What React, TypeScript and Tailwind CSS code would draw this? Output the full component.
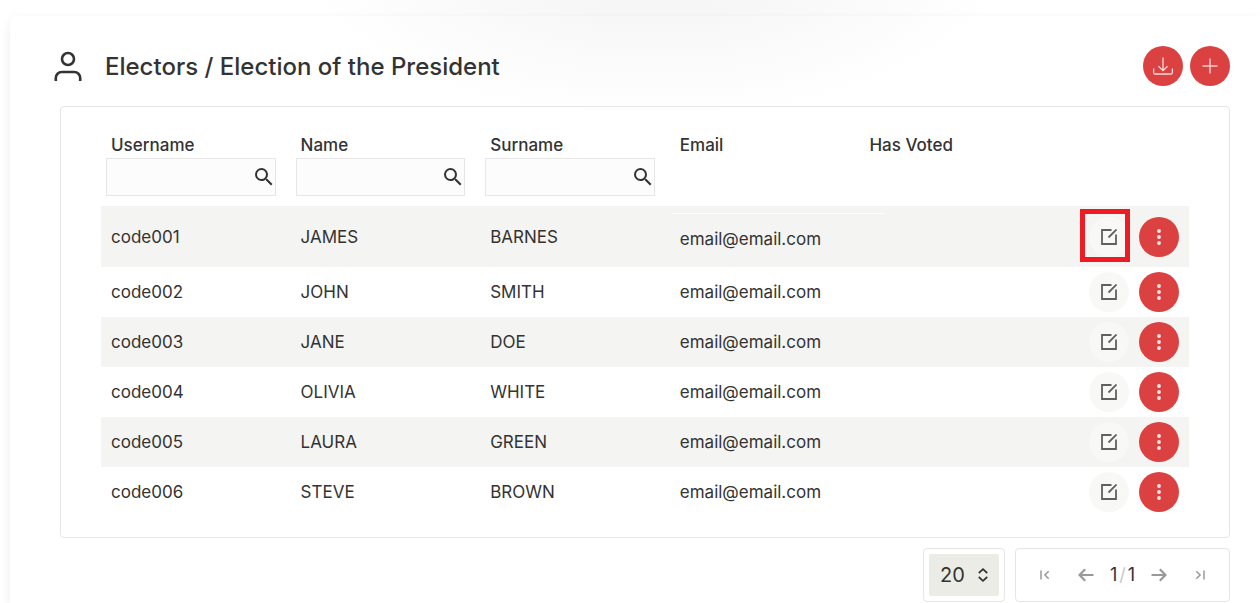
import type { ReactNode } from "react";
import { MdSearch } from "react-icons/md";

type Elector = {
  username: string;
  name: string;
  surname: string;
  email: string;
};

const electors: Elector[] = [
  { username: "code001", name: "JAMES", surname: "BARNES", email: "email@email.com" },
  { username: "code002", name: "JOHN", surname: "SMITH", email: "email@email.com" },
  { username: "code003", name: "JANE", surname: "DOE", email: "email@email.com" },
  { username: "code004", name: "OLIVIA", surname: "WHITE", email: "email@email.com" },
  { username: "code005", name: "LAURA", surname: "GREEN", email: "email@email.com" },
  { username: "code006", name: "STEVE", surname: "BROWN", email: "email@email.com" },
];

const columns = [
  { title: "Username", searchable: true },
  { title: "Name", searchable: true },
  { title: "Surname", searchable: true },
  { title: "Email", searchable: false },
  { title: "Has Voted", searchable: false },
];

const UserIcon = () => (
  <svg width="28" height="30" viewBox="0 0 28 30" fill="none" stroke="#333333" strokeWidth="2.6">
    <circle cx="14" cy="8" r="6" />
    <path d="M1.8 30v-3a6 6 0 0 1 6-6h12.4a6 6 0 0 1 6 6v3" />
  </svg>
);

const DownloadIcon = () => (
  <svg width="20" height="20" viewBox="0 0 20 20" fill="none" stroke="#f8dcdc" strokeWidth="1.3">
    <path d="M10 1.5v13M5.5 10.3l4.5 4.4 4.5-4.4" />
    <path d="M.6 12.5v4a1.5 1.5 0 0 0 1.5 1.5h15.8a1.5 1.5 0 0 0 1.5-1.5v-4" />
  </svg>
);

const PlusIcon = () => (
  <svg width="16" height="16" viewBox="0 0 16 16" fill="none" stroke="#f5cdcd" strokeWidth="1.4">
    <path d="M8 .5v15M.5 8h15" />
  </svg>
);

const EditIcon = () => (
  <svg width="16" height="16" viewBox="0 0 16 16" fill="none" stroke="#606060" strokeWidth="1.8">
    <path d="M10.5 1H1v14h14V5.5M7.5 8.5l8-8" />
  </svg>
);

const DotsIcon = () => (
  <svg width="4" height="16" viewBox="0 0 4 16" fill="#fae6e6">
    <circle cx="2" cy="2" r="1.9" />
    <circle cx="2" cy="8" r="1.9" />
    <circle cx="2" cy="14" r="1.9" />
  </svg>
);

const SortIcon = () => (
  <svg width="10" height="14" viewBox="0 0 10 14" fill="none" stroke="#333333" strokeWidth="1.7">
    <path d="M.8 5 5 1.2 9.2 5M.8 9 5 12.8 9.2 9" />
  </svg>
);

const EdgeIcon = ({ className = "" }: { className?: string }) => (
  <svg className={className} width="10" height="10" viewBox="0 0 10 10" fill="none" stroke="#999999" strokeWidth="1.5">
    <path d="M1 .5v9M8.7 1.2 4.9 5l3.8 3.8" />
  </svg>
);

const ArrowIcon = ({ className = "" }: { className?: string }) => (
  <svg className={className} width="16" height="14" viewBox="0 0 16 14" fill="none" stroke="#999999" strokeWidth="2.2">
    <path d="M15.5 7H1.5M7.2 1.2 1.5 7l5.7 5.8" />
  </svg>
);

const RoundButton = ({ label, children }: { label: string; children: ReactNode }) => (
  <button
    type="button"
    aria-label={label}
    className="flex size-10 items-center justify-center rounded-full bg-[#db4141]"
  >
    {children}
  </button>
);

const ElectorsTable = () => (
  <table className="w-full table-fixed border-collapse text-left text-[17px] leading-6">
    <thead>
      <tr>
        {columns.map((column) => (
          <th key={column.title} className="pr-[15px] pb-[10px] pl-[5px] align-top font-medium">
            <div className="pl-[5px]">{column.title}</div>
            {column.searchable && (
              <div className="relative mt-px">
                <input
                  type="text"
                  aria-label={`Search ${column.title}`}
                  className="block h-[38px] w-full border border-[#e6e6e6] bg-[#fcfcfc] pr-7 pl-2"
                />
                <MdSearch className="absolute top-[7px] right-0 size-6" />
              </div>
            )}
          </th>
        ))}
        <td className="w-[140px]" />
      </tr>
    </thead>
    <tbody>
      {electors.map((elector, index) => {
        const selected = index === 0;
        return (
          <tr key={elector.username} className={`odd:bg-[#f4f4f2] ${selected ? "h-[61px]" : "h-[50px]"}`}>
            <td className="pl-[10px]">{elector.username}</td>
            <td className="pl-[10px]">{elector.name}</td>
            <td className="pl-[10px]">{elector.surname}</td>
            <td className={`relative pl-[10px] ${selected ? "pt-1" : ""}`}>
              {selected && <span className="absolute top-[7px] left-[2px] h-px w-[212px] bg-white" />}
              {elector.email}
            </td>
            <td />
            <td className="pr-[10px]">
              <div className="flex justify-end gap-[10px]">
                <div className="relative">
                  <button
                    type="button"
                    aria-label={`Edit ${elector.username}`}
                    className="flex size-10 items-center justify-center rounded-full bg-[#f8f8f6]"
                  >
                    <EditIcon />
                  </button>
                  {selected && (
                    <span className="pointer-events-none absolute -top-2 -right-px -bottom-[5px] -left-[9px] border-[5px] border-[#ed1c24]" />
                  )}
                </div>
                <RoundButton label={`Actions for ${elector.username}`}>
                  <DotsIcon />
                </RoundButton>
              </div>
            </td>
          </tr>
        );
      })}
    </tbody>
  </table>
);

const Pagination = () => (
  <div className="mt-[10px] flex justify-end gap-[10px]">
    <div className="rounded border border-[#e6e6e6] bg-white p-[5px]">
      <div className="relative">
        <select
          aria-label="Rows per page"
          defaultValue="20"
          className="block h-[42px] w-[70px] appearance-none rounded-xs bg-[#ecece7] pl-[11px] text-xl"
        >
          <option>10</option>
          <option>20</option>
          <option>50</option>
        </select>
        <span className="pointer-events-none absolute inset-y-0 right-[11px] flex items-center">
          <SortIcon />
        </span>
      </div>
    </div>
    <nav
      aria-label="Pagination"
      className="flex w-[215px] items-center justify-between rounded border border-[#e6e6e6] bg-white px-6 text-lg"
    >
      <button type="button" aria-label="First page">
        <EdgeIcon />
      </button>
      <div className="flex items-center gap-4">
        <button type="button" aria-label="Previous page">
          <ArrowIcon />
        </button>
        <span className="flex gap-[2px]">
          1<span className="text-[#c8c8c8]">/</span>1
        </span>
        <button type="button" aria-label="Next page">
          <ArrowIcon className="rotate-180" />
        </button>
      </div>
      <button type="button" aria-label="Last page">
        <EdgeIcon className="rotate-180" />
      </button>
    </nav>
  </div>
);

export default function App() {
  return (
    <div className="overflow-hidden bg-white bg-[radial-gradient(360px_180px_at_52%_-60px,#f1f1f2,#ffffff)] bg-no-repeat pt-4 pl-[10px] font-[Inter,sans-serif] text-[#333333]">
      <main className="rounded-tl-lg pt-[30px] pr-[30px] pb-px pl-[50px] shadow-[0_4px_12px_rgba(0,0,0,0.08)]">
        <header className="-ml-[6px] flex items-center">
          <UserIcon />
          <h1 className="ml-[23px] flex-1 pt-px text-2xl font-medium">Electors / Election of the President</h1>
          <div className="flex gap-[7px]">
            <RoundButton label="Download">
              <DownloadIcon />
            </RoundButton>
            <RoundButton label="Add elector">
              <PlusIcon />
            </RoundButton>
          </div>
        </header>
        <section className="mt-5 rounded border border-[#e6e6e6] bg-white px-10 pt-[26px] pb-5">
          <ElectorsTable />
        </section>
        <Pagination />
      </main>
    </div>
  );
}
